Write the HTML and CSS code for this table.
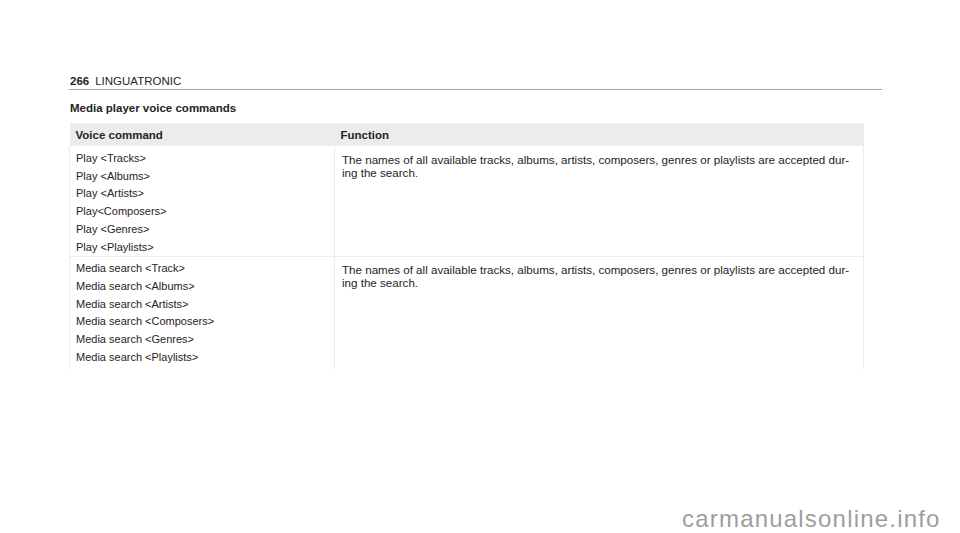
FILE: index.html
```html
<!DOCTYPE html>
<html lang="en">
<head>
<meta charset="utf-8">
<title>LINGUATRONIC 266</title>
<link rel="stylesheet" href="styles.css">
</head>
<body>
<div class="page">
  <header class="page-head">
    <span class="page-num">266</span><span class="chapter">LINGUATRONIC</span>
  </header>
  <h2 class="section-title">Media player voice commands</h2>
  <table class="cmd-table">
    <thead>
      <tr>
        <th class="col-cmd">Voice command</th>
        <th class="col-fn">Function</th>
      </tr>
    </thead>
    <tbody>
      <tr class="row-first">
        <td class="col-cmd">
          <div>Play &lt;Tracks&gt;</div>
          <div>Play &lt;Albums&gt;</div>
          <div>Play &lt;Artists&gt;</div>
          <div>Play&lt;Composers&gt;</div>
          <div>Play &lt;Genres&gt;</div>
          <div>Play &lt;Playlists&gt;</div>
        </td>
        <td class="col-fn">The names of all available tracks, albums, artists, composers, genres or playlists are accepted dur-<br>ing the search.</td>
      </tr>
      <tr class="row-second">
        <td class="col-cmd">
          <div>Media search &lt;Track&gt;</div>
          <div>Media search &lt;Albums&gt;</div>
          <div>Media search &lt;Artists&gt;</div>
          <div>Media search &lt;Composers&gt;</div>
          <div>Media search &lt;Genres&gt;</div>
          <div>Media search &lt;Playlists&gt;</div>
        </td>
        <td class="col-fn">The names of all available tracks, albums, artists, composers, genres or playlists are accepted dur-<br>ing the search.</td>
      </tr>
    </tbody>
  </table>
</div>
<div class="watermark">carmanualsonline.info</div>
</body>
</html>
```
FILE: styles.css
```css
html, body {
  margin: 0;
  padding: 0;
  background: #ffffff;
}

body {
  font-family: "Liberation Sans", Arial, sans-serif;
  color: #262324;
  width: 960px;
  height: 533px;
  position: relative;
  overflow: hidden;
}

.page {
  padding: 74px 0 0 69px;
  width: 813px;
}

.page-head {
  font-size: 11.5px;
  line-height: 14px;
  padding-bottom: 1px;
  border-bottom: 1px solid #9ea7a6;
  padding-left: 1px;
}

.page-num {
  font-weight: bold;
  margin-right: 6px;
}

.section-title {
  margin: 11px 0 0 1px;
  font-size: 11.5px;
  line-height: 14px;
  font-weight: bold;
}

.cmd-table {
  margin-top: 8px;
  width: 795px;
  border-collapse: collapse;
  table-layout: fixed;
  font-size: 11px;
}

.cmd-table th {
  background: #ebeceb;
  font-weight: bold;
  font-size: 11.5px;
  text-align: left;
  height: 23px;
  padding: 0 6px;
  vertical-align: middle;
}

.cmd-table th.col-cmd {
  width: 253px;
}

.cmd-table td {
  vertical-align: top;
  line-height: 17.7px;
  padding: 4px 6px 0 6px;
  border-left: 1px solid #ececec;
  border-right: 1px solid #ececec;
}

.cmd-table td.col-fn {
  padding: 7px 6px 0 7px;
  font-size: 11.6px;
  line-height: 13px;
}

.row-first td {
  border-bottom: 1px solid #ececec;
}

.row-second td.col-cmd {
  padding-top: 3px;
  padding-bottom: 3px;
}

.row-second td.col-fn {
  padding-top: 6px;
}

.watermark {
  position: absolute;
  left: 682px;
  top: 505px;
  font-family: "Liberation Sans", Arial, sans-serif;
  font-size: 24px;
  letter-spacing: 1.2px;
  line-height: 28px;
  color: #9e9e9e;
}
```
